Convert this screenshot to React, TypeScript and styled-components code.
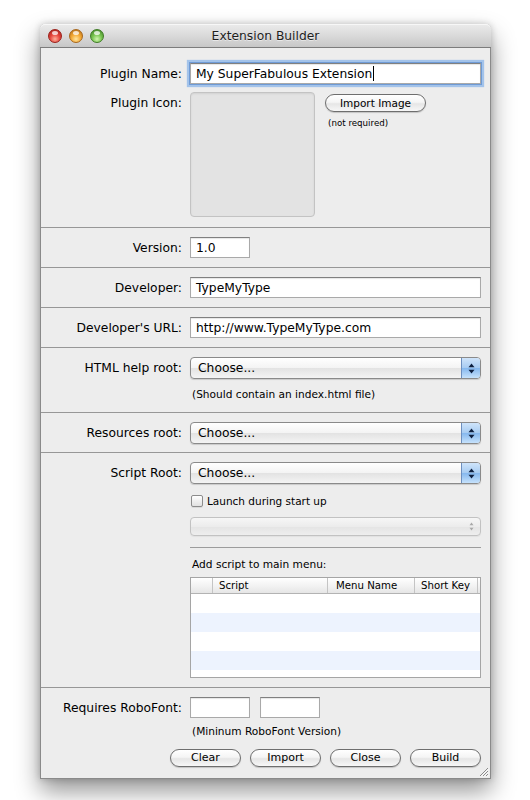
import React from 'react';
import styled, { createGlobalStyle } from 'styled-components';

const FONT = `"DejaVu Sans", "Liberation Sans", sans-serif`;

const GlobalStyle = createGlobalStyle`
  html, body { margin: 0; padding: 0; background: #ffffff; }
  body { font-family: ${FONT}; color: #000; }
  * { box-sizing: border-box; }
`;

const Desktop = styled.div`
  width: 530px;
  height: 800px;
  padding: 24px 0 0 40px;
  overflow: hidden;
`;

const Window = styled.div`
  position: relative;
  width: 451px;
  height: 755px;
  display: flex;
  flex-direction: column;
  background: #ededed;
  border: 1px solid #8a8a8a;
  border-top: none;
  border-radius: 5px 5px 0 0;
  box-shadow: 0 12px 24px rgba(0, 0, 0, 0.42), 0 0 7px rgba(0, 0, 0, 0.2);
`;

const TitleBar = styled.div`
  flex: none;
  height: 24px;
  margin: 0 -1px;
  display: grid;
  grid-template-columns: 1fr auto 1fr;
  align-items: center;
  border-radius: 5px 5px 0 0;
  background: linear-gradient(#ebebeb, #dadada 50%, #c7c7c7);
  border-bottom: 1px solid #7c7c7c;
  box-shadow: inset 0 1px 0 #f7f7f7;
`;

const Lights = styled.div`
  display: flex;
  gap: 7px;
  padding-left: 8px;
`;

const Light = styled.span<{ $c: string; $d: string; $h: string }>`
  width: 14px;
  height: 14px;
  border-radius: 50%;
  position: relative;
  border: 1px solid ${(p) => p.$d};
  background: radial-gradient(circle at 50% 75%, ${(p) => p.$h} 0, ${(p) => p.$c} 45%, ${(p) => p.$d} 100%);
  &::after {
    content: '';
    position: absolute;
    left: 3px;
    top: 1px;
    width: 6px;
    height: 4px;
    border-radius: 50%;
    background: rgba(255, 255, 255, 0.75);
  }
`;

const Title = styled.div`
  font-size: 12.3px;
  color: #1e1e1e;
  text-shadow: 0 1px 0 rgba(255, 255, 255, 0.5);
`;

const Section = styled.section<{ $pt: number; $pb: number; $first?: boolean }>`
  display: flex;
  flex-direction: column;
  padding: ${(p) => p.$pt}px 9px ${(p) => p.$pb}px 0;
  border-top: ${(p) => (p.$first ? 'none' : '1px solid #979797')};
`;

const Row = styled.div<{ $mt?: number }>`
  display: grid;
  grid-template-columns: 141px 1fr;
  column-gap: 8px;
  align-items: start;
  margin-top: ${(p) => p.$mt ?? 0}px;
`;

const Label = styled.div<{ $h?: number }>`
  height: ${(p) => p.$h ?? 21}px;
  display: flex;
  align-items: center;
  justify-content: flex-end;
  font-size: 12.3px;
  white-space: nowrap;
`;

const Controls = styled.div<{ $row?: boolean; $gap?: number }>`
  display: flex;
  flex-direction: ${(p) => (p.$row ? 'row' : 'column')};
  gap: ${(p) => p.$gap ?? 0}px;
  align-items: ${(p) => (p.$row ? 'flex-start' : 'stretch')};
  min-width: 0;
`;

const TextField = styled.div<{ $w?: number; $focus?: boolean }>`
  height: 21px;
  width: ${(p) => (p.$w ? `${p.$w}px` : '100%')};
  flex: none;
  display: flex;
  align-items: center;
  padding: 0 5px;
  background: #fff;
  border: 1px solid #a9a9a9;
  border-top-color: #808080;
  box-shadow: inset 0 1px 1px rgba(0, 0, 0, 0.1)
    ${(p) => (p.$focus ? ', 0 0 0 1px #6f9bd6, 0 0 1px 3px #a3c3ea' : '')};
  font-size: 12.3px;
  white-space: nowrap;
  overflow: hidden;
`;

const Caret = styled.span`
  display: inline-block;
  width: 1px;
  height: 15px;
  margin-left: 1px;
  background: #000;
`;

const ImageWell = styled.div`
  width: 125px;
  height: 125px;
  flex: none;
  border: 1px solid #c3c3c3;
  border-radius: 4px;
  background: #e3e3e3;
  box-shadow: inset 0 1px 2px rgba(0, 0, 0, 0.08);
`;

const SideColumn = styled.div`
  display: flex;
  flex-direction: column;
  margin-left: 10px;
  padding-top: 2px;
`;

const PushButton = styled.button<{ $w: number; $fs?: number }>`
  width: ${(p) => p.$w}px;
  height: 18px;
  padding: 0;
  border: 1px solid #6e6e6e;
  border-radius: 9px;
  background: linear-gradient(#ffffff, #f5f5f5 45%, #e6e6e6 55%, #f7f7f7);
  box-shadow: 0 1px 1px rgba(0, 0, 0, 0.18);
  font-family: ${FONT};
  font-size: ${(p) => p.$fs ?? 11}px;
  line-height: 16px;
  color: #000;
`;

const Note = styled.div<{ $mt?: number; $fs?: number; $pl?: number }>`
  margin-top: ${(p) => p.$mt ?? 0}px;
  padding-left: ${(p) => p.$pl ?? 2}px;
  font-size: ${(p) => p.$fs ?? 10.6}px;
  line-height: 12px;
  white-space: nowrap;
`;

const Popup = styled.div<{ $disabled?: boolean; $mt?: number }>`
  margin-top: ${(p) => p.$mt ?? 0}px;
  height: ${(p) => (p.$disabled ? 19 : 22)}px;
  display: flex;
  align-items: stretch;
  border: 1px solid ${(p) => (p.$disabled ? '#c2c2c2' : '#8a8a8a')};
  border-radius: 4px;
  background: ${(p) =>
    p.$disabled
      ? 'linear-gradient(#f6f6f6, #ececec 50%, #e4e4e4 51%, #eeeeee)'
      : 'linear-gradient(#ffffff, #f4f4f4 48%, #e3e3e3 52%, #f4f4f4)'};
  box-shadow: 0 1px 1px rgba(0, 0, 0, ${(p) => (p.$disabled ? 0.05 : 0.15)});
  overflow: hidden;
`;

const PopupText = styled.div`
  flex: 1;
  display: flex;
  align-items: center;
  padding-left: 7px;
  font-size: 12.3px;
  white-space: nowrap;
`;

const ArrowBox = styled.div<{ $disabled?: boolean }>`
  width: 19px;
  flex: none;
  display: flex;
  align-items: center;
  justify-content: center;
  border-left: 1px solid ${(p) => (p.$disabled ? 'transparent' : '#6d8fbf')};
  background: ${(p) =>
    p.$disabled
      ? 'transparent'
      : 'linear-gradient(#cfe4fa, #a8ccf2 48%, #86b8ee 52%, #c6e2fc)'};
`;

const CheckRow = styled.label`
  margin-top: 10px;
  height: 14px;
  display: flex;
  align-items: center;
  gap: 4px;
  padding-left: 1px;
  font-size: 10.5px;
`;

const CheckBox = styled.span`
  width: 12px;
  height: 12px;
  border: 1px solid #8c8c8c;
  border-radius: 2px;
  background: linear-gradient(#ffffff, #efefef 50%, #e2e2e2);
  box-shadow: 0 1px 0 rgba(0, 0, 0, 0.08);
`;

const Rule = styled.div`
  margin-top: 11px;
  height: 1px;
  background: #9c9c9c;
`;

const Caption = styled.div`
  margin-top: 10px;
  padding-left: 2px;
  font-size: 10.6px;
  line-height: 13px;
`;

const Table = styled.div`
  margin-top: 6px;
  height: 101px;
  display: flex;
  flex-direction: column;
  background: #fff;
  border: 1px solid #a5a5a5;
  overflow: hidden;
`;

const HeaderRow = styled.div`
  flex: none;
  height: 16px;
  display: grid;
  grid-template-columns: 22px 115px 87px 63px 1fr;
  background: linear-gradient(#ffffff, #f3f3f3 50%, #e6e6e6);
  border-bottom: 1px solid #b3b3b3;
`;

const HeaderCell = styled.div<{ $pl?: number }>`
  display: flex;
  align-items: center;
  padding-left: ${(p) => p.$pl ?? 7}px;
  font-size: 10.2px;
  border-right: 1px solid #c4c4c4;
  white-space: nowrap;
  &:last-child {
    border-right: none;
  }
`;

const DataRow = styled.div<{ $alt: boolean }>`
  flex: none;
  height: 19px;
  background: ${(p) => (p.$alt ? '#edf3fe' : '#ffffff')};
`;

const ButtonBar = styled.div`
  margin-top: 12px;
  display: flex;
  justify-content: flex-end;
  gap: 9px;
`;

const Grip = styled.svg`
  position: absolute;
  right: 1px;
  bottom: 1px;
`;

const Arrows = ({ color }: { color: string }) => (
  <svg width="7" height="11" viewBox="0 0 7 11">
    <path d="M3.5 0.5 L6.5 4.2 L0.5 4.2 Z" fill={color} />
    <path d="M3.5 10.5 L6.5 6.8 L0.5 6.8 Z" fill={color} />
  </svg>
);

const SmallArrows = () => (
  <svg width="5" height="9" viewBox="0 0 5 9">
    <path d="M2.5 0.5 L4.5 3.3 L0.5 3.3 Z" fill="#a8a8a8" />
    <path d="M2.5 8.5 L4.5 5.7 L0.5 5.7 Z" fill="#a8a8a8" />
  </svg>
);

const PopupButton = ({ text }: { text: string }) => (
  <Popup>
    <PopupText>{text}</PopupText>
    <ArrowBox>
      <Arrows color="#0d1f3f" />
    </ArrowBox>
  </Popup>
);

export default function App() {
  const rows = [false, true, false, true, false];
  return (
    <Desktop>
      <GlobalStyle />
      <Window>
        <TitleBar>
          <Lights>
            <Light $c="#e5453c" $d="#9b1f19" $h="#ffb09a" />
            <Light $c="#f4a832" $d="#a8661a" $h="#ffe6a0" />
            <Light $c="#76c34e" $d="#3e7c24" $h="#d2f7b0" />
          </Lights>
          <Title>Extension Builder</Title>
          <div />
        </TitleBar>

        <Section $first $pt={15} $pb={10}>
          <Row>
            <Label>Plugin Name:</Label>
            <TextField $focus>
              My SuperFabulous Extension
              <Caret />
            </TextField>
          </Row>
          <Row $mt={8}>
            <Label $h={22}>Plugin Icon:</Label>
            <Controls $row>
              <ImageWell />
              <SideColumn>
                <PushButton $w={101} $fs={10.5}>
                  Import Image
                </PushButton>
                <Note $mt={5} $fs={8.7} $pl={3}>
                  (not required)
                </Note>
              </SideColumn>
            </Controls>
          </Row>
        </Section>

        <Section $pt={9} $pb={9}>
          <Row>
            <Label>Version:</Label>
            <TextField $w={60}>1.0</TextField>
          </Row>
        </Section>

        <Section $pt={9} $pb={9}>
          <Row>
            <Label>Developer:</Label>
            <TextField>TypeMyType</TextField>
          </Row>
        </Section>

        <Section $pt={9} $pb={9}>
          <Row>
            <Label>Developer's URL:</Label>
            <TextField>http://www.TypeMyType.com</TextField>
          </Row>
        </Section>

        <Section $pt={9} $pb={12}>
          <Row>
            <Label $h={22}>HTML help root:</Label>
            <Controls>
              <PopupButton text="Choose..." />
              <Note $mt={9}>(Should contain an index.html file)</Note>
            </Controls>
          </Row>
        </Section>

        <Section $pt={9} $pb={8}>
          <Row>
            <Label $h={22}>Resources root:</Label>
            <PopupButton text="Choose..." />
          </Row>
        </Section>

        <Section $pt={9} $pb={9}>
          <Row>
            <Label $h={22}>Script Root:</Label>
            <Controls>
              <PopupButton text="Choose..." />
              <CheckRow>
                <CheckBox />
                Launch during start up
              </CheckRow>
              <Popup $disabled $mt={9}>
                <PopupText />
                <ArrowBox $disabled>
                  <SmallArrows />
                </ArrowBox>
              </Popup>
              <Rule />
              <Caption>Add script to main menu:</Caption>
              <Table>
                <HeaderRow>
                  <HeaderCell />
                  <HeaderCell $pl={6}>Script</HeaderCell>
                  <HeaderCell $pl={8}>Menu Name</HeaderCell>
                  <HeaderCell $pl={6}>Short Key</HeaderCell>
                  <HeaderCell />
                </HeaderRow>
                {rows.map((alt, i) => (
                  <DataRow key={i} $alt={alt} />
                ))}
              </Table>
            </Controls>
          </Row>
        </Section>

        <Section $pt={9} $pb={8}>
          <Row>
            <Label>Requires RoboFont:</Label>
            <Controls>
              <Controls $row $gap={10}>
                <TextField $w={60} />
                <TextField $w={60} />
              </Controls>
              <Note $mt={7}>(Mininum RoboFont Version)</Note>
            </Controls>
          </Row>
          <ButtonBar>
            <PushButton $w={71}>Clear</PushButton>
            <PushButton $w={71}>Import</PushButton>
            <PushButton $w={71}>Close</PushButton>
            <PushButton $w={71}>Build</PushButton>
          </ButtonBar>
        </Section>

        <Grip width="11" height="11" viewBox="0 0 11 11">
          <path d="M10 2 L2 10 M10 5 L5 10 M10 8 L8 10" stroke="#8a8a8a" strokeWidth="1" />
          <path d="M10.8 2.8 L2.8 10.8 M10.8 5.8 L5.8 10.8 M10.8 8.8 L8.8 10.8" stroke="#ffffff" strokeWidth="0.8" />
        </Grip>
      </Window>
    </Desktop>
  );
}
